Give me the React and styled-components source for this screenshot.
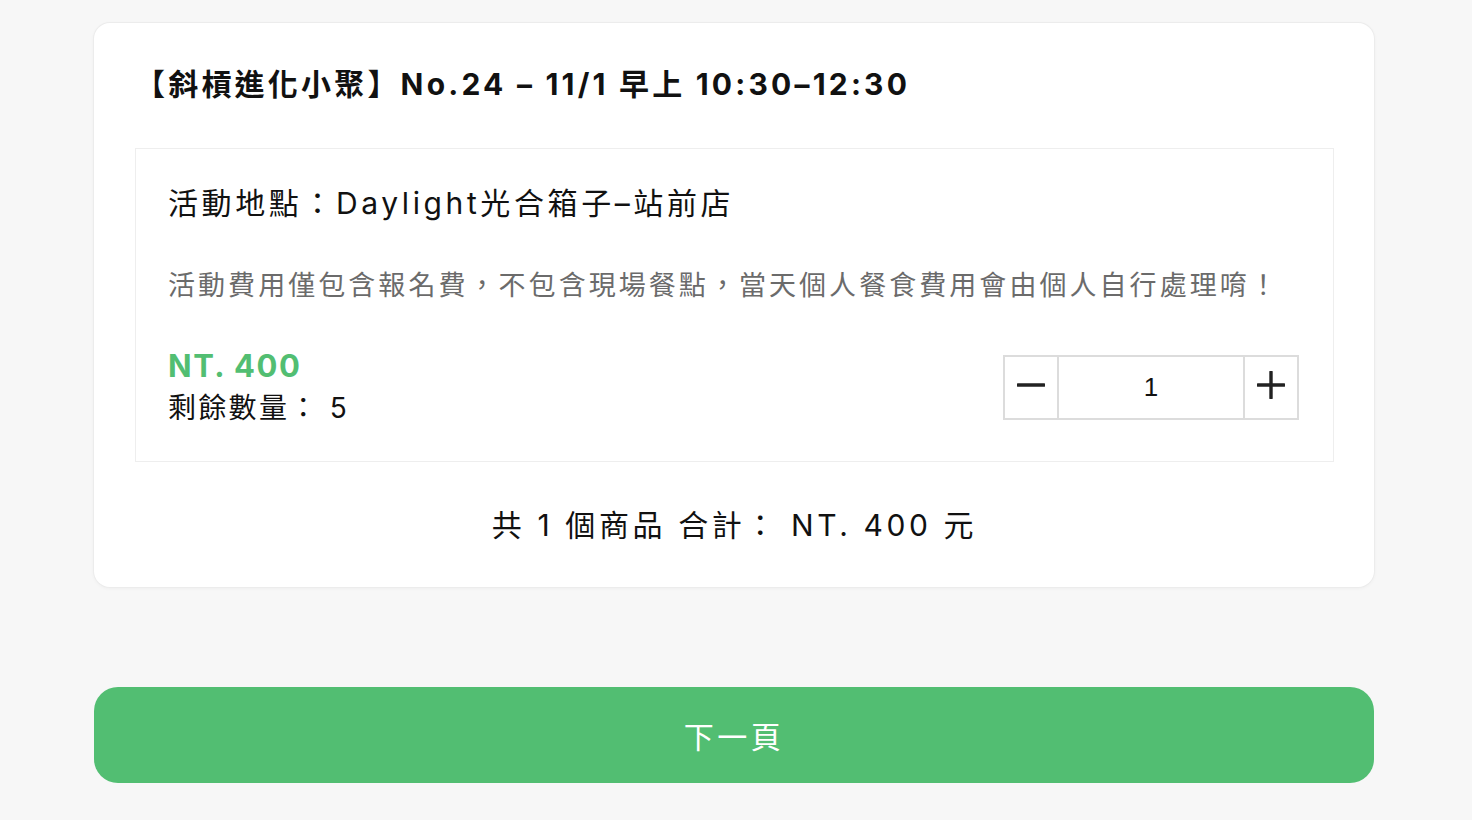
import React, { useState } from "react";
import styled, { createGlobalStyle } from "styled-components";

const Global = createGlobalStyle`
  html, body { margin: 0; padding: 0; background: #f7f7f7; }
  body { font-family: Inter, "Noto Sans CJK TC", sans-serif; color: #111; }
  * { box-sizing: border-box; }
`;

const Page = styled.div`
  min-height: 820px;
  padding: 23px 98px 0 94px;
  display: flex;
  flex-direction: column;
`;

const Card = styled.section`
  background: #fff;
  border-radius: 16px;
  box-shadow: 0 0 0 1px #ececec, 0 1px 4px rgba(0, 0, 0, 0.05);
  padding: 40px 40px 40px 41px;
  display: flex;
  flex-direction: column;
`;

const Title = styled.h1`
  margin: 0;
  font-size: 30px;
  line-height: 42px;
  font-weight: 700;
  letter-spacing: 3.2px;
  color: #111;
`;

const ItemBox = styled.div`
  margin-top: 43px;
  border: 1px solid #eeeeee;
  padding: 32px;
  display: flex;
  flex-direction: column;
`;

const Location = styled.div`
  font-size: 30px;
  line-height: 44px;
  letter-spacing: 3.6px;
  color: #111;
`;

const Note = styled.p`
  margin: 39px 0 0;
  font-size: 27px;
  line-height: 44px;
  letter-spacing: 3.05px;
  color: #6b6b6b;
`;

const PriceRow = styled.div`
  margin-top: 37px;
  display: flex;
  align-items: center;
  justify-content: space-between;
`;

const PriceInfo = styled.div`
  display: flex;
  flex-direction: column;
`;

const Price = styled.div`
  font-size: 31px;
  line-height: 42px;
  font-weight: 700;
  letter-spacing: 1.5px;
  color: #52be72;
`;

const Stock = styled.div`
  font-size: 28px;
  line-height: 42px;
  letter-spacing: 2.3px;
  color: #111;
`;

const Stepper = styled.div`
  display: flex;
  height: 65px;
  border: 2px solid #dcdcdc;
  margin-right: 2px;
`;

const StepButton = styled.button`
  width: ${(p) => p.$w}px;
  border: none;
  background: #fff;
  padding: 0 0 4px;
  display: flex;
  align-items: center;
  justify-content: center;
  cursor: pointer;
  color: #222;
`;

const Qty = styled.div`
  width: 188px;
  border-left: 2px solid #dcdcdc;
  border-right: 2px solid #dcdcdc;
  display: flex;
  align-items: center;
  justify-content: center;
  font-family: "Liberation Sans", Arial, sans-serif;
  font-size: 26px;
  color: #111;
`;

const Total = styled.div`
  margin-top: 41px;
  text-align: center;
  font-size: 30px;
  line-height: 44px;
  letter-spacing: 3.6px;
  color: #111;
`;

const NextButton = styled.button`
  margin-top: 100px;
  height: 96px;
  border: none;
  border-radius: 24px;
  background: #52be72;
  color: #fff;
  font-family: Inter, "Noto Sans CJK TC", sans-serif;
  font-size: 30px;
  letter-spacing: 3.5px;
  display: flex;
  align-items: center;
  justify-content: center;
  cursor: pointer;
`;

const Minus = () => (
  <svg width="28" height="28" viewBox="0 0 28 28">
    <path d="M1 14H27" stroke="currentColor" strokeWidth="3.4" strokeLinecap="round" />
  </svg>
);

const Plus = () => (
  <svg width="28" height="28" viewBox="0 0 28 28">
    <path d="M1 14H27M14 1V27" stroke="currentColor" strokeWidth="3.4" strokeLinecap="round" />
  </svg>
);

export default function App() {
  const [qty, setQty] = useState(1);
  return (
    <>
      <Global />
      <Page>
        <Card>
          <Title>【斜槓進化小聚】No.24 – 11/1 早上 10:30–12:30</Title>
          <ItemBox>
            <Location>活動地點：Daylight光合箱子–站前店</Location>
            <Note>活動費用僅包含報名費，不包含現場餐點，當天個人餐食費用會由個人自行處理唷！</Note>
            <PriceRow>
              <PriceInfo>
                <Price>NT. 400</Price>
                <Stock>剩餘數量： 5</Stock>
              </PriceInfo>
              <Stepper>
                <StepButton $w={52} onClick={() => setQty(Math.max(1, qty - 1))} aria-label="減少">
                  <Minus />
                </StepButton>
                <Qty>{qty}</Qty>
                <StepButton $w={52} onClick={() => setQty(Math.min(5, qty + 1))} aria-label="增加">
                  <Plus />
                </StepButton>
              </Stepper>
            </PriceRow>
          </ItemBox>
          <Total>共 {qty} 個商品 合計： NT. {qty * 400} 元</Total>
        </Card>
        <NextButton>下一頁</NextButton>
      </Page>
    </>
  );
}
